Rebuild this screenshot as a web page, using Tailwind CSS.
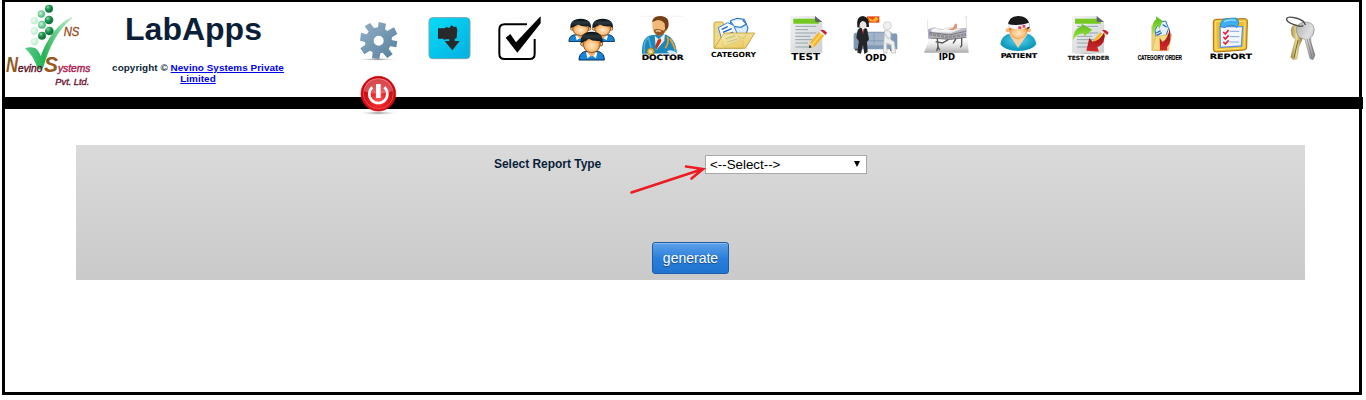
<!DOCTYPE html>
<html lang="en">
<head>
    <meta charset="UTF-8">
    <meta name="viewport" content="width=device-width, initial-scale=1.0">
    <title>LabApps - Report</title>
    <script src="https://cdn.jsdelivr.net/npm/@tailwindcss/browser@4"></script>
</head>
<body class="bg-white h-[400px] overflow-hidden font-['Liberation_Sans',Arial,sans-serif] text-[#0b1f38]">
    <div class="ml-[2px] w-[1360px] h-[395px] border-[3px] border-t-2 border-black">
        <header class="flex h-[95px]">
            <svg class="w-[100px] h-[95px] shrink-0" viewBox="15 6 300 285">
                <defs>
                    <radialGradient id="dot" cx=".35" cy=".3"><stop offset="0" stop-color="#8fd8a8"/><stop offset=".5" stop-color="#2fa05d"/><stop offset="1" stop-color="#127a40"/></radialGradient>
                    <radialGradient id="dotMid" cx=".4" cy=".4"><stop offset="0" stop-color="#c9f2d8"/><stop offset="1" stop-color="#55bd80"/></radialGradient>
                    <radialGradient id="dotPale" cx=".4" cy=".4"><stop offset="0" stop-color="#f0fbf3"/><stop offset="1" stop-color="#c3efd0"/></radialGradient>
                    <linearGradient id="tick" x1="0" y1="0" x2="1" y2="0"><stop offset="0" stop-color="#5cc98b"/><stop offset=".4" stop-color="#25b455"/><stop offset="1" stop-color="#c3f0d2"/></linearGradient>
                    <linearGradient id="letter" x1="0" y1="0" x2="1" y2="1"><stop offset="0" stop-color="#2d7a2e"/><stop offset=".5" stop-color="#a8521f"/><stop offset="1" stop-color="#6c6b1c"/></linearGradient>
                </defs>
                <g fill="url(#dot)"><circle cx="147" cy="26" r="12"/><circle cx="147" cy="60" r="13"/><circle cx="148" cy="93" r="13"/><circle cx="126" cy="107" r="12"/></g>
                <g fill="url(#dotMid)"><circle cx="124" cy="42" r="11"/><circle cx="126" cy="74" r="12"/></g>
                <g fill="url(#dotPale)"><circle cx="103" cy="62" r="11"/><circle cx="103" cy="93" r="11"/><circle cx="104" cy="125" r="11"/></g>
                <path d="M75 145Q92 138 106 145Q116 151 122 168Q155 82 214 51Q218 48 215 56Q157 104 130 202Q120 216 111 202Q100 167 75 145Z" fill="url(#tick)"/>
                <g font-family="Liberation Sans, Arial, sans-serif" font-style="italic">
                    <text x="191" y="107" font-size="38" textLength="47" lengthAdjust="spacingAndGlyphs" fill="#984a1c" stroke="#984a1c">NS</text>
                    <text x="18" y="217" font-size="66" font-weight="bold" textLength="36" lengthAdjust="spacingAndGlyphs" fill="url(#letter)">N</text>
                    <text x="54" y="216" font-size="32" textLength="73" lengthAdjust="spacingAndGlyphs" fill="#5d1025" stroke="#5d1025" stroke-width="1.2">evino</text>
                    <text x="132" y="217" font-size="68" font-weight="bold" textLength="42" lengthAdjust="spacingAndGlyphs" fill="url(#letter)">S</text>
                    <text x="174" y="217" font-size="33" textLength="97" lengthAdjust="spacingAndGlyphs" fill="#ae2452" stroke="#ae2452" stroke-width="1.4">ystems</text>
                    <text x="166" y="255" font-size="29" textLength="102" lengthAdjust="spacingAndGlyphs" fill="#701832" stroke="#701832" stroke-width="1.2">Pvt. Ltd.</text>
                </g>
            </svg>
            <div class="w-[186px] shrink-0 text-center font-bold">
                <h1 class="mt-[9px] mr-[9px] text-[32px] leading-[36px]">LabApps</h1>
                <p class="mt-[15px] text-[9.9px] leading-[11px] tracking-[0.06px]">copyright © <a href="#" class="text-[#0000ee] underline">Nevino Systems Private<br>Limited</a></p>
            </div>

            <nav class="relative ml-[52px] mt-[10px] flex flex-wrap w-[1000px] h-[112px] content-start">
                <!-- settings -->
                <svg class="w-[71px] h-[56px]" viewBox="-21 21 213 168">
                    <defs><linearGradient id="gear" x1="0" y1="0" x2="1" y2="1"><stop offset="0" stop-color="#91b0c5"/><stop offset="1" stop-color="#587f9e"/></linearGradient>
                    <radialGradient id="shade"><stop offset="0" stop-color="#888"/><stop offset="1" stop-color="#fff" stop-opacity="0"/></radialGradient></defs>
                    <ellipse cx="82" cy="163" rx="66" ry="5" fill="url(#shade)"/>
                    <path fill="url(#gear)" fill-rule="evenodd" d="M84 67L86 51L108 56L105 73L112 78L132 67L142 87L126 97L125 105L142 109L139 127L121 124L116 131L128 148L112 159L98 143L91 145L88 162L66 160L68 142L60 137L43 148L31 130L46 119L45 111L30 107L33 83L50 88L56 80L44 64L60 54L72 69ZM86 92A15 15 0 1 0 86 122A15 15 0 1 0 86 92Z"/>
                </svg>
                <!-- hand -->
                <svg class="w-[71px] h-[56px]" viewBox="192 21 213 168">
                    <defs><linearGradient id="cyan" x1="0" y1="0" x2="1" y2="1"><stop offset="0" stop-color="#06dcf6"/><stop offset="1" stop-color="#05afe2"/></linearGradient></defs>
                    <rect x="237" y="38" width="123" height="123" rx="11" fill="url(#cyan)" stroke="#6da7b4" stroke-width="3"/>
                    <path fill="#292929" d="M264 70H283L290 66L298 69L304 61L311 65L319 65L322 76L320 98L314 102V108H329L307 136L284 108H298V103H288L281 105V101H264Z"/>
                </svg>
                <!-- checkbox -->
                <svg class="w-[71px] h-[56px]" viewBox="15 21 213 168">
                    <path d="M141 58H74Q58 58 58 74V146Q58 162 74 162H149Q164 162 164 146V102" fill="none" stroke="#000" stroke-width="6"/>
                    <path d="M77 98L91 87L108 112L166 50L182 34V55L112 143Z"/>
                </svg>
                <!-- users -->
                <svg class="w-[71px] h-[56px]" viewBox="228 21 213 168">
                    <defs>
                        <radialGradient id="face" cx=".5" cy=".55"><stop offset="0" stop-color="#ffe6c7"/><stop offset=".65" stop-color="#fbc27e"/><stop offset="1" stop-color="#de8a35"/></radialGradient>
                        <linearGradient id="hair" x1="0" y1="0" x2="0" y2="1"><stop offset="0" stop-color="#060b0e"/><stop offset=".4" stop-color="#2b373e"/><stop offset="1" stop-color="#0a0d10"/></linearGradient>
                        <g id="person">
                            <path d="M-38 52Q-38 32 -22 27H22Q38 32 38 52Z" fill="#1684d8" stroke="#062b4e" stroke-width="3"/>
                            <path d="M-17 29L-13 47L0 38L13 47L17 29Z" fill="#fff"/>
                            <path d="M-10 22H10V34L0 42L-10 34Z" fill="#f0ad66"/>
                            <circle cx="-27" cy="4" r="6" fill="#fbc27e" stroke="#4a2a0c" stroke-width="2"/><circle cx="27" cy="4" r="6" fill="#fbc27e" stroke="#4a2a0c" stroke-width="2"/>
                            <path d="M-26-8Q-28 29 0 30Q28 29 26-8Q0-25 -26-8Z" fill="url(#face)" stroke="#5a3510" stroke-width="2"/>
                            <path d="M-33 1Q-36-32 0-33Q36-32 33 1L25-5Q4-3-9-12Q-16-5-26-2Z" fill="url(#hair)"/>
                        </g>
                    </defs>
                    <use href="#person" transform="translate(302 68) scale(.93 .8)"/>
                    <use href="#person" transform="translate(368 68) scale(.93 .8)"/>
                    <use href="#person" transform="translate(335 113)"/>
                </svg>
                <!-- doctor -->
                <svg class="w-[71px] h-[56px]" viewBox="-9 21 213 168">
                    <path d="M33 34H162" stroke="#f1ece9" stroke-width="2"/>
                    <path d="M36 146Q34 92 68 90L102 87Q136 95 141 145Z" fill="#1c88ba"/>
                    <path d="M43 143Q39 107 56 98L66 143M122 102Q134 116 135 144" fill="none" stroke="#52b8da" stroke-width="4"/>
                    <path d="M74 92L86 103L105 85L103 107L78 136Z" fill="#e7edf0"/>
                    <path d="M83 105L92 100L94 108L79 134L75 125Z" fill="#c1301d"/>
                    <path d="M67 49Q68 37 88 36Q116 37 114 57Q113 86 89 92Q68 89 67 66Z" fill="#f2b878"/>
                    <path d="M67 49Q69 33 94 33Q119 36 116 60Q114 74 106 78L104 56Q98 46 82 45L67 51Z" fill="#754018"/>
                    <path d="M71 75Q83 68 100 77L106 71Q105 90 88 92Q74 91 71 75Z" fill="#935622"/>
                    <path d="M77 79Q85 75 92 80" stroke="#f6c795" stroke-width="4" fill="none"/>
                    <path d="M112 94Q119 111 106 130M120 101L136 132" fill="none" stroke="#ed9b24" stroke-width="5"/>
                    <circle cx="62" cy="140" r="11" fill="#dfb345" stroke="#966b22" stroke-width="2"/><circle cx="62" cy="140" r="4" fill="#f9edbe"/>
                    <path d="M110 139Q124 130 141 144L125 151Z" fill="#d9eaff"/>
                    <text x="35" y="165" font-family="DejaVu Sans, sans-serif" font-weight="bold" font-size="22" textLength="126" lengthAdjust="spacingAndGlyphs" fill="#000" stroke="#000" stroke-width=".6">DOCTOR</text>
                </svg>
                <!-- category -->
                <svg class="w-[71px] h-[56px]" viewBox="204 21 213 168">
                    <defs><linearGradient id="folder" x1="0" y1="0" x2="1" y2="1"><stop offset="0" stop-color="#fff2a8"/><stop offset="1" stop-color="#e3bd4d"/></linearGradient></defs>
                    <path d="M252 129V56Q252 51 258 51H277L284 62H340V129Z" fill="#efd987" stroke="#c9a440" stroke-width="3"/>
                    <path d="M301 47L321 40L343 43L354 69L345 100L306 89Z" fill="#d9ebff" stroke="#1766ca" stroke-width="3"/>
                    <path d="M302 50L312 64L333 67L349 57L338 45" fill="#fff" stroke="#327bdc" stroke-width="4"/>
                    <path d="M265 68L293 53L311 61L330 106L282 126Z" fill="#f9fcff" stroke="#3582da" stroke-width="3"/>
                    <path d="M275 73L293 65M279 82L305 71M283 92L310 81M287 101L315 90" stroke="#1764bd" stroke-width="4"/>
                    <path d="M253 130L277 92Q280 84 288 84H374L346 130Z" fill="url(#folder)" fill-opacity=".87" stroke="#c29c3a" stroke-width="2.5"/>
                    <path d="M287 102L316 93M291 111L322 102" stroke="#b9c6a5" stroke-width="3"/>
                    <text x="243" y="157" font-family="DejaVu Sans, sans-serif" font-weight="bold" font-size="21" textLength="135" lengthAdjust="spacingAndGlyphs" fill="#000">CATEGORY</text>
                </svg>
                <!-- test -->
                <svg class="w-[71px] h-[56px]" viewBox="-18 21 213 168">
                    <defs>
                        <linearGradient id="paper" x1="0" y1="0" x2="1" y2="1"><stop offset="0" stop-color="#f3f3f3"/><stop offset="1" stop-color="#cdcfd0"/></linearGradient>
                        <g id="sheet">
                            <ellipse cx="92" cy="144" rx="66" ry="5" fill="url(#shade)"/>
                            <path d="M46 33H121L142 51V143H46Z" fill="url(#paper)"/>
                            <path d="M55 41H121L132 50V56H55Z" fill="#75c822"/>
                            <path d="M120 33L142 51H124Q120 51 120 46Z" fill="#606469"/>
                            <path d="M61 64H124M61 74H99M61 84H124M61 94H106M61 104H112M61 114H99M61 126H106" stroke="#91a5ae" stroke-width="3"/>
                        </g>
                        <g id="pencil">
                            <path d="M132 80L149 91L118 126L102 128L106 111Z" fill="#f7b425"/><path d="M140 85L112 119" stroke="#ffdd6d" stroke-width="5"/>
                            <path d="M106 111L118 126L102 128Z" fill="#f1d0a0"/><path d="M104 119L110 127L102 129Z" fill="#222"/>
                            <path d="M131 82L136 76L152 87L148 93Z" fill="#e8e8e8"/><path d="M136 76Q146 71 156 83L152 90Z" fill="#c4222b"/>
                        </g>
                    </defs>
                    <use href="#sheet"/><use href="#pencil"/>
                    <text x="49" y="165" font-family="DejaVu Sans, sans-serif" font-weight="bold" font-size="25" textLength="86" lengthAdjust="spacingAndGlyphs" fill="#000">TEST</text>
                </svg>
                <!-- opd -->
                <svg class="w-[71px] h-[56px]" viewBox="195 21 213 168">
                    <path d="M276 34H313V53H276Z" fill="#e74a18"/><path d="M278 36L293 45L303 35L311 42L301 50L285 49Z" fill="#ffb51f"/>
                    <path d="M236 88Q239 81 248 83V80H347L353 86Q367 81 367 93V133H236Z" fill="#7f99b7"/>
                    <path d="M250 83H345V106H250Z" fill="#a0b4ca"/><path d="M249 109H353V121H249Z" fill="#a4b6ca"/><path d="M297 84V119M243 91V132M359 91V132" stroke="#8199b5" stroke-width="2"/>
                    <path d="M240 134H251M345 135H360" stroke="#444" stroke-width="5"/>
                    <path d="M248 75L258 66L276 71L282 103L276 111L278 141L268 147L264 119L258 146L247 143L251 108L244 98Z" fill="#25262a"/>
                    <path d="M260 69L264 82L269 69Z" fill="#fff"/><path d="M263 72H266V86H263Z" fill="#c22626"/>
                    <circle cx="264" cy="58" r="12" fill="#e9e5e3"/><path d="M247 67Q242 34 264 33Q284 35 282 66L274 66Q277 49 262 48Q252 52 254 68Z" fill="#1b1b1d"/>
                    <circle cx="337" cy="62" r="12" fill="#f0f0ef" stroke="#c4c4c4" stroke-width="2"/>
                    <path d="M329 77Q341 73 348 84L347 104L358 110L362 144H350L348 119L335 115L336 144H325L327 105Z" fill="#efefed" stroke="#b8b8b8" stroke-width="2"/><path d="M329 85L339 101L349 95" fill="none" stroke="#c2c2c2" stroke-width="3"/>
                    <text x="271" y="167" font-family="DejaVu Sans, sans-serif" font-weight="bold" font-size="26" textLength="64" lengthAdjust="spacingAndGlyphs" fill="#000">OPD</text>
                </svg>
                <!-- ipd -->
                <svg class="w-[71px] h-[56px]" viewBox="-12 21 213 168">
                    <defs><linearGradient id="floor" x1="0" y1="0" x2="0" y2="1"><stop offset="0" stop-color="#fff" stop-opacity="0"/><stop offset="1" stop-color="#aaa"/></linearGradient></defs>
                    <path d="M43 102L157 93L161 143H27Z" fill="url(#floor)"/>
                    <path d="M39 72L57 67L94 76L155 68L153 98L106 104L43 99Z" fill="#b9b9bd"/>
                    <path d="M49 73Q64 65 79 74L102 67L140 72L108 84L51 82Z" fill="#f3f3f3" stroke="#bbb"/>
                    <path d="M97 73L113 69L121 55L127 59L125 71L113 76Z" fill="#dc9a7d"/>
                    <path d="M43 82L103 90L155 78M45 99L105 103L154 97" fill="none" stroke="#77777e" stroke-width="3"/>
                    <path d="M42 87L102 97L154 88" stroke="#8e8e93" stroke-width="9" fill="none" stroke-dasharray="10 2"/>
                    <path d="M38 44V73L44 106M149 39L154 33L155 102" fill="none" stroke="#d5d3df" stroke-width="2"/>
                    <path d="M42 76V101M147 78V98" stroke="#9c92c0" stroke-width="4"/>
                    <path d="M67 101L69 125L65 138M69 125L74 136M100 104L82 114L62 110M140 99V121L136 127M123 102L114 115" fill="none" stroke="#555" stroke-width="4"/>
                    <text x="71" y="166" font-family="DejaVu Sans, sans-serif" font-weight="bold" font-size="24" textLength="49" lengthAdjust="spacingAndGlyphs" fill="#000">IPD</text>
                </svg>
                <!-- patient -->
                <svg class="w-[71px] h-[56px]" viewBox="201 21 213 168">
                    <defs><radialGradient id="shirt" cx=".5" cy=".4"><stop offset="0" stop-color="#5dd5ee"/><stop offset="1" stop-color="#0e9abe"/></radialGradient></defs>
                    <path d="M256 118Q258 90 290 84H330Q361 90 364 118Q350 138 310 138Q270 138 256 118Z" fill="url(#shirt)"/>
                    <path d="M282 87L298 82H324L338 87L309 129Z" fill="#f9cfa4"/>
                    <circle cx="278" cy="76" r="6" fill="#f2b780"/><circle cx="342" cy="76" r="6" fill="#f2b780"/>
                    <path d="M281 60Q280 101 310 103Q341 99 340 60Z" fill="url(#face)"/>
                    <path d="M279 62Q280 34 309 33Q344 33 344 68L338 73L331 59L281 66Z" fill="#191919"/>
                    <path d="M278 57Q305 65 343 53L344 65Q310 79 280 67Z" fill="#f3f5f8"/>
                    <path d="M310 64H319V72H310ZM323 60H331V68H323Z" fill="#e44358"/>
                    <text x="257" y="158" font-family="DejaVu Sans, sans-serif" font-weight="bold" font-size="20" textLength="110" lengthAdjust="spacingAndGlyphs" fill="#000" stroke="#000" stroke-width=".5">PATIENT</text>
                </svg>
                <!-- test order -->
                <svg class="w-[71px] h-[56px]" viewBox="-6 21 213 168">
                    <defs>
                        <linearGradient id="green" x1="0" y1="0" x2="0" y2="1"><stop offset="0" stop-color="#5bb91a"/><stop offset="1" stop-color="#a1ec42"/></linearGradient>
                        <linearGradient id="red" x1="0" y1="0" x2="0" y2="1"><stop offset="0" stop-color="#8e1116"/><stop offset="1" stop-color="#d8272d"/></linearGradient>
                    </defs>
                    <use href="#sheet" x="5"/><use href="#pencil" x="5"/>
                    <path d="M53 107Q56 66 82 65L79 56L112 74L88 94L86 84Q64 86 53 107Z" fill="url(#green)"/>
                    <path d="M148 81Q154 116 127 127L132 140L94 137L103 99L113 110Q134 108 148 81Z" fill="url(#red)"/>
                    <text x="38" y="165" font-family="DejaVu Sans, sans-serif" font-weight="bold" font-size="17" textLength="125" lengthAdjust="spacingAndGlyphs" fill="#111" stroke="#111" stroke-width=".5">TEST ORDER</text>
                </svg>
                <!-- category order -->
                <svg class="w-[71px] h-[56px]" viewBox="207 21 213 168">
                    <ellipse cx="320" cy="137" rx="33" ry="4" fill="url(#shade)"/>
                    <path d="M290 136V62L299 56L306 65H338V136Z" fill="#efcf76" stroke="#d4a64d"/>
                    <path d="M300 75L314 52L332 48L341 71L326 108L305 101Z" fill="#e4f0ff" stroke="#2872cd" stroke-width="3"/>
                    <path d="M304 84L317 77M305 92L320 83M323 59L335 66" stroke="#246fc5" stroke-width="4"/>
                    <path d="M291 136L302 94L350 88L340 136Z" fill="#f3dc82" stroke="#d7b252" stroke-width="2"/>
                    <path d="M292 91Q289 48 304 43L302 34L323 47L313 73L308 59Q301 66 292 91Z" fill="url(#green)"/>
                    <path d="M344 69Q352 111 336 127L337 136H315L314 98L322 111Q339 104 344 69Z" fill="url(#red)"/>
                    <text transform="translate(248 164) scale(.7 1.15)" font-family="Liberation Sans, Arial, sans-serif" font-weight="bold" font-size="19" textLength="190" lengthAdjust="spacingAndGlyphs" fill="#000" stroke="#000" stroke-width=".5">CATEGORY ORDER</text>
                </svg>
                <!-- report -->
                <svg class="w-[71px] h-[56px]" viewBox="0 36 213 168">
                    <path d="M62 58L151 56Q158 57 157 64L155 144Q154 150 147 150L64 156Q55 156 55 148V66Q55 59 62 58Z" fill="#efbd2c" stroke="#a66b0a" stroke-width="3"/>
                    <path d="M62 64H150L147 144L63 149Z" fill="none" stroke="#ffe37c" stroke-width="3"/>
                    <path d="M75 80H143L139 138L76 142Z" fill="#f1f6ff" stroke="#5c94ea" stroke-width="4"/>
                    <path d="M76 80Q75 59 92 56L122 54Q132 57 131 72L125 83Q120 74 106 76Q94 77 90 83Z" fill="#3daef2" stroke="#1777c5" stroke-width="2"/>
                    <path d="M87 65Q103 57 122 61" stroke="#a0e2ff" stroke-width="4" fill="none"/>
                    <path d="M104 94H133M104 110H133M104 126H132" stroke="#83a7e6" stroke-width="3"/>
                    <path d="M85 96L91 102L101 90M85 111L91 117L101 106M85 126L91 132L101 121" fill="none" stroke="#e91f32" stroke-width="5"/>
                    <text x="44" y="178" font-family="DejaVu Sans, sans-serif" font-weight="bold" font-size="22" textLength="127" lengthAdjust="spacingAndGlyphs" fill="#000" stroke="#000" stroke-width=".5">REPORT</text>
                </svg>
                <!-- keys -->
                <svg class="w-[71px] h-[56px]" viewBox="213 36 213 168">
                    <defs>
                        <linearGradient id="silver" x1="0" y1="0" x2="1" y2="1"><stop offset="0" stop-color="#b0b0b0"/><stop offset=".5" stop-color="#dfdfdf"/><stop offset="1" stop-color="#828282"/></linearGradient>
                        <linearGradient id="gold" x1="0" y1="0" x2="1" y2="0"><stop offset="0" stop-color="#a28a41"/><stop offset=".5" stop-color="#e8d99a"/><stop offset="1" stop-color="#94762b"/></linearGradient>
                    </defs>
                    <path d="M289 98Q286 79 301 73L322 80L321 120L312 139L306 177L294 179L287 171L301 118Q290 111 289 98Z" fill="url(#gold)" stroke="#98833e"/>
                    <path d="M309 120L297 174" stroke="#796429" stroke-width="3"/>
                    <path d="M304 92Q303 72 325 67Q346 64 354 76Q361 89 355 102Q352 109 347 113L348 128L360 166L354 179L345 176L330 118Q306 114 304 92Z" fill="url(#silver)" stroke="#858585" stroke-width="2"/>
                    <path d="M336 116L351 173M343 115L357 164" stroke="#707070" stroke-width="2"/>
                    <path d="M325 77Q316 82 297 74Q272 65 275 55Q279 48 303 54Q329 61 331 75" fill="none" stroke="#4c4c4c" stroke-width="4"/>
                </svg>
                <!-- power -->
                <svg class="w-[71px] h-[56px]" viewBox="-21 189 213 168">
                    <defs><radialGradient id="power" cx=".5" cy=".65"><stop offset="0" stop-color="#ff5653"/><stop offset=".6" stop-color="#df161d"/><stop offset="1" stop-color="#c9040c"/></radialGradient></defs>
                    <ellipse cx="85" cy="324" rx="61" ry="7" fill="url(#shade)"/>
                    <circle cx="85" cy="266" r="52" fill="url(#power)" stroke="#c80d12" stroke-width="2"/>
                    <circle cx="85" cy="266" r="45" fill="none" stroke="#f36a68" stroke-width="2"/>
                    <path d="M42 258Q45 222 85 220Q125 222 128 258Q85 276 42 258Z" fill="#fff" opacity=".28"/>
                    <path d="M67 247A27 27 0 1 0 103 247" fill="none" stroke="#fff" stroke-width="8"/>
                    <path d="M78 237H92V279H78Z" fill="#fff"/>
                </svg>
            </nav>
        </header>

        <div class="h-[12px] w-[1361px] -ml-[3px] bg-black"></div>

        <main class="relative mt-[36px] ml-[71px] w-[1229px] h-[135px] bg-linear-to-b from-[#dadada] to-[#cacaca]">
            <form class="flex flex-col">
                <div class="flex pt-[10px] pl-[418px]">
                    <label for="reportType" class="w-[211px] text-[12px] leading-[18px] font-bold tracking-[-0.03px]">Select Report Type</label>
                    <div id="reportType" class="flex items-center justify-between w-[162px] h-[19px] bg-white border border-[#a9a9a9] pl-[4px] pr-[5px] text-[13.33px] leading-[17px] text-black">
                        <span>&lt;--Select--&gt;</span>
                        <svg class="w-[8px] h-[7px]" viewBox="0 0 8 7"><path d="M1 0H7L4 6Z"/></svg>
                    </div>
                </div>
                <button type="button" class="mt-[68px] ml-[576px] w-[77px] h-[32px] rounded-[3px] border border-[#1b5ca6] bg-linear-to-b from-[#5da1e8] from-0% via-[#2a7fdc] via-50% to-[#1f74d0] shadow-[inset_0_1px_0_#8dbdf0] text-[14px] text-white text-shadow-[0_1px_1px_#174a86]">generate</button>
            </form>
            <!-- pointer to the select box -->
            <svg class="absolute left-[550px] top-[15px] w-[84px] h-[40px]" viewBox="626 160 84 40">
                <path d="M631.5 192.5L703 169M686 166.5L703 169L691.5 178.5" fill="none" stroke="#ed1c24" stroke-width="2.6" stroke-linecap="round"/>
            </svg>
        </main>
    </div>
</body>
</html>
